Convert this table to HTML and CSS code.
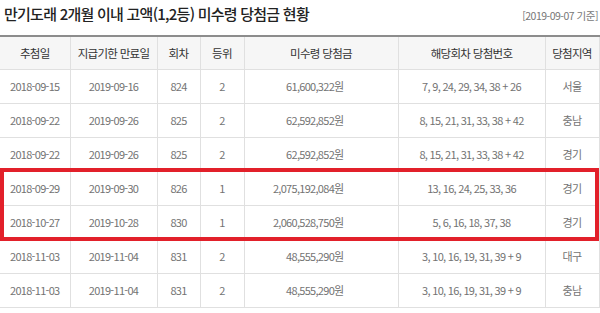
FILE: index.html
```html
<!DOCTYPE html>
<html lang="ko">
<head>
<meta charset="utf-8">
<link rel="stylesheet" href="styles.css">
</head>
<body>
<div class="page">
  <div class="head">
    <h1 class="title">만기도래 2개월 이내 고액(1,2등) 미수령 당첨금 현황</h1>
    <span class="basis">[2019-09-07 기준]</span>
  </div>
  <div class="table-wrap">
    <table class="list">
      <colgroup>
        <col class="c1"><col class="c2"><col class="c3"><col class="c4"><col class="c5"><col class="c6"><col class="c7">
      </colgroup>
      <thead>
        <tr><th>추첨일</th><th>지급기한 만료일</th><th>회차</th><th>등위</th><th>미수령 당첨금</th><th>해당회차 당첨번호</th><th>당첨지역</th></tr>
      </thead>
      <tbody>
        <tr><td>2018-09-15</td><td>2019-09-16</td><td>824</td><td>2</td><td class="money">61,600,322원</td><td>7, 9, 24, 29, 34, 38 + 26</td><td class="area">서울</td></tr>
        <tr><td>2018-09-22</td><td>2019-09-26</td><td>825</td><td>2</td><td class="money">62,592,852원</td><td>8, 15, 21, 31, 33, 38 + 42</td><td class="area">충남</td></tr>
        <tr><td>2018-09-22</td><td>2019-09-26</td><td>825</td><td>2</td><td class="money">62,592,852원</td><td>8, 15, 21, 31, 33, 38 + 42</td><td class="area">경기</td></tr>
        <tr><td>2018-09-29</td><td>2019-09-30</td><td>826</td><td>1</td><td class="money">2,075,192,084원</td><td>13, 16, 24, 25, 33, 36</td><td class="area">경기</td></tr>
        <tr><td>2018-10-27</td><td>2019-10-28</td><td>830</td><td>1</td><td class="money">2,060,528,750원</td><td>5, 6, 16, 18, 37, 38</td><td class="area">경기</td></tr>
        <tr><td>2018-11-03</td><td>2019-11-04</td><td>831</td><td>2</td><td class="money">48,555,290원</td><td>3, 10, 16, 19, 31, 39 + 9</td><td class="area">대구</td></tr>
        <tr><td>2018-11-03</td><td>2019-11-04</td><td>831</td><td>2</td><td class="money">48,555,290원</td><td>3, 10, 16, 19, 31, 39 + 9</td><td class="area">충남</td></tr>
      </tbody>
    </table>
    <div class="highlight"></div>
  </div>
</div>
</body>
</html>
```
FILE: styles.css
```css
* { box-sizing: border-box; }
html, body { margin: 0; padding: 0; background: #fff; }
body {
  font-family: "Noto Sans CJK KR", "Noto Sans", sans-serif;
  color: #666;
  width: 600px;
  overflow: hidden;
}
.page { padding: 0 1px 0 0; }
.head {
  display: flex;
  justify-content: space-between;
  align-items: center;
  height: 27px;
  padding: 0 1px 0 4px;
  margin-bottom: 8px;
}
.title {
  margin: 0;
  font-size: 15px;
  font-weight: 500;
  color: #222;
  letter-spacing: -0.75px;
  line-height: 20px;
}
.basis {
  font-size: 10.5px;
  color: #777;
  letter-spacing: -0.5px;
  padding-top: 3px;
}
.table-wrap { position: relative; }
.list {
  width: 599px;
  border-collapse: collapse;
  table-layout: fixed;
  border-top: 2px solid #8c8c8c;
}
.c1 { width: 70px; }
.c2 { width: 87px; }
.c3 { width: 43px; }
.c4 { width: 44px; }
.c5 { width: 154px; }
.c6 { width: 147px; }
.c7 { width: 54px; }
.list th, .list td {
  border: 1px solid #e0e0e0;
  text-align: center;
  height: 34px;
  padding: 0;
  font-size: 11px;
  letter-spacing: -0.7px;
  font-weight: 400;
}
.list th:first-child, .list td:first-child { border-left: 0; }
.list th {
  background: #f6f6f6;
  color: #333;
  font-size: 11.5px;
  height: 33px;
  border-top: 0;
}
.list td { color: #737373; }
.list td.money { text-align: right; padding-right: 54px; }
.highlight {
  position: absolute;
  left: 0;
  top: 133px;
  width: 599px;
  height: 73px;
  border: 4px solid #e2202a;
}
```
